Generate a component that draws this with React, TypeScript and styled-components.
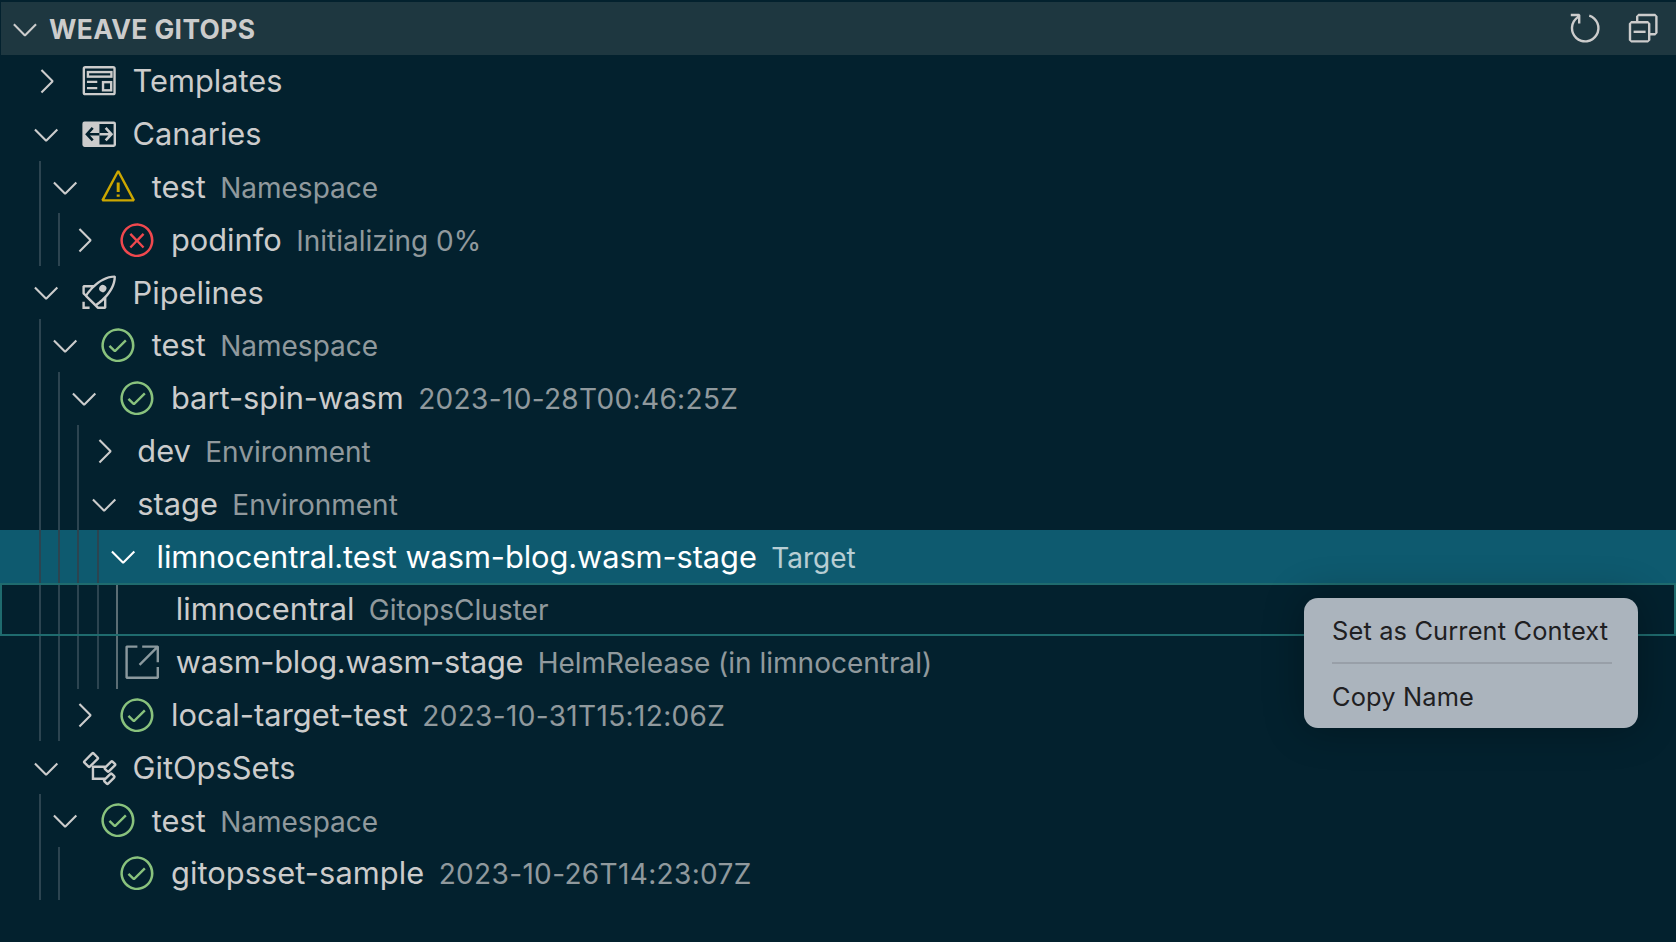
import React from "react";
import styled, { createGlobalStyle } from "styled-components";
import {
  VscChevronDown,
  VscChevronRight,
  VscCollapseAll,
  VscError,
  VscLinkExternal,
  VscPass,
  VscRefresh,
  VscRocket,
  VscWarning,
} from "react-icons/vsc";

const GlobalStyle = createGlobalStyle`
  html, body {
    margin: 0;
    height: 100%;
    background: #03212e;
  }
  body {
    font-family: Inter, "Liberation Sans", sans-serif;
    overflow: hidden;
  }
`;

const INDENT = 19.2;

const Panel = styled.div`
  position: relative;
  height: 942px;
  padding-top: 2px;
  box-sizing: border-box;
  background: #03212e;
  color: #cccccc;
`;

const Header = styled.div`
  display: flex;
  align-items: center;
  height: 53px;
  margin-left: 1px;
  padding: 0 14px 0 5px;
  background: #1e3740;
`;

const HeaderTitle = styled.h2`
  flex: 1;
  margin: 0 0 0 5px;
  font-size: 26.4px;
  font-weight: 700;
  letter-spacing: 0.4px;
  color: #cccccc;
`;

const Action = styled.span`
  display: flex;
  width: 38.4px;
  height: 38.4px;
  margin-left: 20px;
  align-items: center;
  justify-content: center;
  font-size: 38.4px;
`;

const RefreshAction = styled(Action)`
  transform: translateX(1px);
`;

const Row = styled.div<{ $selected?: boolean; $focused?: boolean }>`
  display: flex;
  align-items: center;
  box-sizing: border-box;
  height: 52.8px;
  padding-left: 39px;
  font-size: 30.8px;
  white-space: nowrap;
  color: ${(p) => (p.$selected ? "#ffffff" : "#cccccc")};
  background: ${(p) => (p.$selected ? "#0e5a6f" : "transparent")};
  outline: ${(p) => (p.$focused ? "2px solid #1f6b6e" : "none")};
  outline-offset: -2px;
`;

const Guide = styled.span<{ $active?: boolean }>`
  flex: none;
  align-self: stretch;
  box-sizing: border-box;
  width: ${INDENT}px;
  border-left: 2px solid ${(p) => (p.$active ? "#5b6d74" : "#2c4450")};
`;

const Twistie = styled.span<{ $muted?: boolean }>`
  flex: none;
  display: flex;
  align-items: center;
  justify-content: center;
  width: 38.4px;
  height: 38.4px;
  margin-left: -12px;
  font-size: 38.4px;
  color: ${(p) => (p.$muted ? "#8b999e" : "inherit")};
`;

const Icon = styled.span<{ $color?: string }>`
  flex: none;
  display: flex;
  align-items: center;
  justify-content: center;
  width: 38.4px;
  height: 38.4px;
  margin-left: 14.4px;
  font-size: 38.4px;
  color: ${(p) => p.$color ?? "#cccccc"};
`;

const Label = styled.span<{ $tracking?: number }>`
  margin-left: 14.4px;
  padding-bottom: 1px;
  letter-spacing: ${(p) => p.$tracking ?? 0}px;
`;

const Description = styled.span<{ $date?: boolean }>`
  margin-left: 14.4px;
  padding-top: 2px;
  font-size: 28px;
  letter-spacing: ${(p) => (p.$date ? "0.35px" : "0")};
  opacity: 0.7;
`;

const Menu = styled.div`
  position: absolute;
  left: 1304px;
  top: 598px;
  box-sizing: border-box;
  width: 334px;
  height: 130px;
  padding: 13px 28px 0;
  border-radius: 14px;
  background: #abb4bd;
  box-shadow: 0 0 40px rgba(0, 0, 0, 0.3);
  color: #1f2022;
  font-size: 25.4px;
  letter-spacing: 0.15px;
  white-space: nowrap;
`;

const MenuItem = styled.div`
  height: 40px;
  line-height: 40px;
`;

const MenuDivider = styled.div`
  height: 2px;
  margin: 11px -2px 13px 0;
  background: #989fa8;
`;

const TemplateIcon = () => (
  <svg width="1em" height="1em" viewBox="0 0 16 16" fill="none" stroke="currentColor">
    <rect x="1.6" y="2.2" width="12.8" height="11.2" rx="0.6" />
    <rect x="3.3" y="4.2" width="9.8" height="1.9" />
    <path d="M2.9 8.3h4.3M2.9 10.9h4.3" />
    <rect x="9.6" y="8.4" width="3.4" height="3.4" />
  </svg>
);

const CanaryIcon = () => (
  <svg width="1em" height="1em" viewBox="0 0 16 16" fill="none">
    <rect x="1.5" y="3.2" width="13" height="9.6" rx="0.4" stroke="currentColor" />
    <rect x="1.5" y="3.2" width="6.6" height="9.6" fill="currentColor" />
    <path d="M8 8H3M5.3 5.4 2.9 8l2.4 2.6" stroke="#03212e" strokeWidth="1.1" />
    <path d="M8.2 8H13M10.7 5.4 13.1 8l-2.4 2.6" stroke="currentColor" strokeWidth="1.1" />
  </svg>
);

const SetsIcon = () => (
  <svg width="1em" height="1em" viewBox="0 0 16 16" fill="none" stroke="currentColor">
    <rect x="1.9" y="3" width="5.4" height="3.2" rx="0.4" transform="rotate(-45 4.6 4.6)" />
    <rect x="10.3" y="6.2" width="4.4" height="2.2" rx="0.4" transform="rotate(-45 12.5 7.3)" />
    <rect x="10" y="11.3" width="4.4" height="2.2" rx="0.4" transform="rotate(-45 12.2 12.4)" />
    <path d="M5.4 7v5.4h5M5.4 7.4h5.2" />
  </svg>
);

type TreeRow = {
  depth: number;
  label: string;
  tracking?: number;
  description?: string;
  date?: boolean;
  open?: boolean;
  icon?: React.ReactNode;
  color?: string;
  slotIcon?: React.ReactNode;
  selected?: boolean;
  focused?: boolean;
};

const GREEN = "#89c27d";
const RED = "#f0484e";
const YELLOW = "#cca700";

const rows: TreeRow[] = [
  { depth: 0, label: "Templates", open: false, icon: <TemplateIcon /> },
  { depth: 0, label: "Canaries", open: true, icon: <CanaryIcon /> },
  { depth: 1, label: "test", description: "Namespace", open: true, icon: <VscWarning />, color: YELLOW },
  { depth: 2, label: "podinfo", description: "Initializing 0%", open: false, icon: <VscError />, color: RED },
  { depth: 0, label: "Pipelines", open: true, icon: <VscRocket /> },
  { depth: 1, label: "test", description: "Namespace", open: true, icon: <VscPass />, color: GREEN },
  { depth: 2, label: "bart-spin-wasm", description: "2023-10-28T00:46:25Z", date: true, open: true, icon: <VscPass />, color: GREEN },
  { depth: 3, label: "dev", description: "Environment", open: false },
  { depth: 3, label: "stage", description: "Environment", open: true },
  { depth: 4, label: "limnocentral.test wasm-blog.wasm-stage", tracking: -0.08, description: "Target", open: true, selected: true },
  { depth: 5, label: "limnocentral", description: "GitopsCluster", focused: true },
  { depth: 5, label: "wasm-blog.wasm-stage", tracking: -0.27, description: "HelmRelease (in limnocentral)", slotIcon: <VscLinkExternal /> },
  { depth: 2, label: "local-target-test", tracking: 0.06, description: "2023-10-31T15:12:06Z", date: true, open: false, icon: <VscPass />, color: GREEN },
  { depth: 0, label: "GitOpsSets", open: true, icon: <SetsIcon /> },
  { depth: 1, label: "test", description: "Namespace", open: true, icon: <VscPass />, color: GREEN },
  { depth: 2, label: "gitopsset-sample", tracking: 0.06, description: "2023-10-26T14:23:07Z", date: true, icon: <VscPass />, color: GREEN },
];

const App = () => (
  <Panel>
    <GlobalStyle />
    <Header>
      <VscChevronDown size={38} />
      <HeaderTitle>WEAVE GITOPS</HeaderTitle>
      <RefreshAction>
        <VscRefresh />
      </RefreshAction>
      <Action>
        <VscCollapseAll />
      </Action>
    </Header>

    {rows.map((row, index) => (
      <Row key={index} $selected={row.selected} $focused={row.focused}>
        {Array.from({ length: row.depth }, (_, level) => (
          <Guide key={level} $active={row.depth === 5 && level === 4} />
        ))}
        <Twistie $muted={!!row.slotIcon}>
          {row.slotIcon}
          {row.open === true && <VscChevronDown />}
          {row.open === false && <VscChevronRight />}
        </Twistie>
        {row.icon && <Icon $color={row.color}>{row.icon}</Icon>}
        <Label $tracking={row.tracking}>{row.label}</Label>
        {row.description && <Description $date={row.date}>{row.description}</Description>}
      </Row>
    ))}

    <Menu>
      <MenuItem>Set as Current Context</MenuItem>
      <MenuDivider />
      <MenuItem>Copy Name</MenuItem>
    </Menu>
  </Panel>
);

export default App;
